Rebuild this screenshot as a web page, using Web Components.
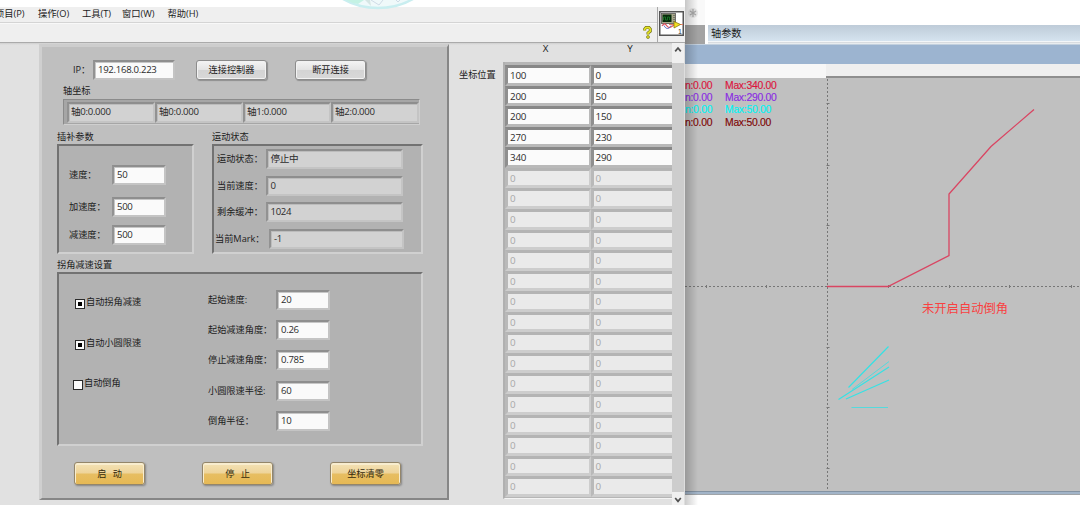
<!DOCTYPE html>
<html lang="zh">
<head>
<meta charset="utf-8">
<title>轴参数</title>
<style>
html,body{margin:0;height:100%;overflow:hidden;background:#fff}
body{font-family:"Open Sans","Noto Sans CJK SC",sans-serif;font-size:9.2px;line-height:12px;color:#1c1c1c}
</style>
</head>
<body>
<desk-top></desk-top>
<script>
const BASE = '*{box-sizing:border-box}:host{box-sizing:border-box;display:block;white-space:nowrap}';
function define(name, css, render) {
  customElements.define(name, class extends HTMLElement {
    constructor() { super(); this.attachShadow({mode: 'open'}); }
    connectedCallback() {
      this.shadowRoot.innerHTML = '<style>' + BASE + css + '</style>' + render(this);
    }
  });
}
const attr = (e, n, d = '') => e.getAttribute(n) ?? d;

/* sunken text box */
define('inset-box', `
:host{height:20px;border:2px solid;border-color:#8e8e8e #c4c4c4 #c4c4c4 #929292;box-shadow:inset 1px 1px #c6c6c6;
  background:#fafafa;padding-left:3px;font-size:9.6px;line-height:15px;letter-spacing:-.3px;color:#2b2b2b;overflow:hidden}
:host([readonly]){background:#d2d2d2;box-shadow:inset 1px 1px #bcbcbc}
`, () => '<slot></slot>');

/* caption with a text box after it */
define('form-field', `
:host{display:flex;align-items:center;height:20px}
span{flex:none;width:var(--lw)}
inset-box{flex:none;width:var(--iw)}
`, e => `<span>${attr(e,'label')}</span><inset-box ${e.hasAttribute('readonly')?'readonly':''}>${attr(e,'value')}</inset-box>`);

define('group-box', `
:host{display:flex;flex-direction:column}
b{font-weight:normal;height:13px;line-height:12px}
div{flex:1;background:#b2b2b2;border:2px solid;border-color:#727272 #d0d0d0 #d0d0d0 #727272}
`, e => `<b>${attr(e,'label')}</b><div><slot></slot></div>`);

define('check-item', `
:host{display:flex;height:12px}
i{flex:none;width:10px;height:10px;margin-top:2px;border:1px solid #2a2a2a;background:#fdfdfd;padding:2px}
:host([checked]) i::before{content:"";display:block;width:4px;height:4px;background:#000}
span{margin:-1px 0 0 1px}
`, () => '<i></i><span><slot></slot></span>');

define('push-button', `
:host{flex:none;width:71px;height:20px;border:1px solid #8c8c8c;border-radius:3px;text-align:center;line-height:18px;
 background:linear-gradient(#f4f4f4,#e4e4e4 48%,#d4d4d4 52%,#d8d8d8);box-shadow:inset 0 0 0 1px #f2f2f2,1px 1px 1px #8f8f8f}
:host([gold]){height:23px;line-height:21px;color:#33290c;border-color:#94866a;white-space:pre;word-spacing:.8px;
 background:linear-gradient(#f3e2b6,#eed49a 48%,#e7be62 52%,#e6b955);box-shadow:inset 0 1px 0 1px #f8edcf,1px 1px 2px #858585}
`, () => '<slot></slot>');

define('axis-strip', `
:host{display:grid;grid-template-columns:repeat(4,88px);height:26px;width:357px;padding:2px 0 0 3px;
 background:#a6a6a6;border:1px solid;border-color:#8b8b8b #cfcfcf #cfcfcf #8b8b8b}
`, () => ['轴0:0.000','轴0:0.000','轴1:0.000','轴2:0.000'].map(t => `<inset-box readonly style="height:21px;line-height:16px;padding-left:2px">${t}</inset-box>`).join(''));

define('coord-table', `
:host{width:169px;height:437px;background:#b6b6b6;border-left:2px solid #b0b0b0;border-bottom:1px solid #f4f4f4;
 padding:3px 0 0;overflow:hidden}
div{display:grid;grid-template-columns:85.5px 86px;grid-template-rows:repeat(21,20.57px)}
span{border:3px solid;border-color:#878787 #b9b9b9 #b9b9b9 #8f8f8f;border-right-width:2px;background:#fbfbfb;
 padding-left:2px;font-size:9.8px;line-height:15px;letter-spacing:-.2px;color:#2b2b2b}
.off{background:#eaeaea;color:#a8a8a8;border-color:#b4b4b4 #cdcdcd #cdcdcd #b9b9b9}
`, () => {
  const rows = [[100,0],[200,50],[200,150],[270,230],[340,290]];
  let h = '';
  for (let i = 0; i < 21; i++) for (let j = 0; j < 2; j++)
    h += rows[i] ? `<span>${rows[i][j]}</span>` : '<span class="off">0</span>';
  return `<div>${h}</div>`;
});

define('scroll-bar', `
:host{display:flex;flex-direction:column;width:13px;background:#cdcdcd;border-right:1px solid #dedede}
svg{flex:none;display:block;background:#f0f0f0}i{flex:1}
`, () => `<svg width="12" height="20"><path d="M3.200 8.400 6 5l2.800 3.400" fill="none" stroke="#505050" stroke-width="1.700"/></svg><i></i>
<svg width="12" height="13"><path d="M3.200 6 6 9.400 8.800 6" fill="none" stroke="#505050" stroke-width="1.700"/></svg>`);

define('control-panel', `
:host{width:410px;height:456px;background:#bfbfbf;border:solid;border-width:3px 2px 2px 3px;
 border-color:#cdcdcd #868686 #868686 #cfcfcf;padding:13px 0 0 15px}
.row{display:flex}
`, () => `
<div class="row" style="padding-left:16px">
 <form-field label="IP：" value="192.168.0.223" style="--lw:20px;--iw:82px"></form-field>
 <push-button style="margin-left:21px">连接控制器</push-button>
 <push-button style="margin-left:28px">断开连接</push-button>
</div>
<div style="margin:5px 0 0 6px;height:14px">轴坐标</div>
<axis-strip style="margin-left:6px"></axis-strip>
<div class="row" style="margin-top:6px;height:123px">
 <group-box label="插补参数" style="width:137px">
  <div style="padding:19px 0 0 10px">
   <form-field label="速度：" value="50" style="--lw:43px;--iw:54px"></form-field>
   <form-field label="加速度：" value="500" style="--lw:43px;--iw:54px;margin-top:12px"></form-field>
   <form-field label="减速度：" value="500" style="--lw:43px;--iw:54px;margin-top:8px"></form-field>
  </div>
 </group-box>
 <group-box label="运动状态" style="width:211px;margin-left:18px">
  <div style="padding:3px 0 0 3px">
   <form-field readonly label="运动状态：" value="停止中" style="--lw:48.500px;--iw:137px"></form-field>
   <form-field readonly label="当前速度：" value="0" style="--lw:48.500px;--iw:137px;margin-top:6.6px"></form-field>
   <form-field readonly label="剩余缓冲：" value="1024" style="--lw:48.500px;--iw:137px;margin-top:6.6px"></form-field>
   <form-field readonly label="当前Mark：" value="-1" style="--lw:54px;--iw:135px;margin:6.6px 0 0 -2px"></form-field>
  </div>
 </group-box>
</div>
<group-box label="拐角减速设置" style="width:366px;height:187px;margin-top:5px">
 <div class="row">
  <div style="padding:23px 0 0 15px;width:149px">
   <check-item checked style="margin-left:1px">自动拐角减速</check-item>
   <check-item checked style="margin:29px 0 0 1px">自动小圆限速</check-item>
   <check-item style="margin:28px 0 0 -1px">自动倒角</check-item>
  </div>
  <div style="padding-top:16px;--lw:68px;--iw:54px">
   <form-field label="起始速度:" value="20"></form-field>
   <form-field label="起始减速角度：" value="0.26" style="margin-top:10px"></form-field>
   <form-field label="停止减速角度：" value="0.785" style="margin-top:10px"></form-field>
   <form-field label="小圆限速半径:" value="60" style="margin-top:11px"></form-field>
   <form-field label="倒角半径：" value="10" style="margin-top:10px"></form-field>
  </div>
 </div>
</group-box>
<div class="row" style="gap:57px;padding:16px 0 0 17px">
 <push-button gold>启  动</push-button><push-button gold>停  止</push-button><push-button gold>坐标清零</push-button>
</div>`);

define('vi-icon', `
:host{width:28px;height:35px;border-left:1px solid #a8a8a8;padding:4px 0 0 1px}
svg{display:block}text{font:7px "Liberation Sans",sans-serif}
`, () => `<svg width="26" height="26" viewBox="0 0 26 26">
<rect x=".75" y=".75" width="23.500" height="23.500" fill="#fff" stroke="#555" stroke-width="1.500"/>
<rect x="2.500" y="2.500" width="14" height="10" fill="#a9a98c" stroke="#555" stroke-width=".8"/>
<rect x="3.500" y="3.500" width="9" height="7.500" fill="#062b0b"/><path d="M4.500 9V6h2v3h2V6h2v3" fill="none" stroke="#1c7d2b" stroke-width=".8"/>
<path d="M15 4v7" stroke="#444" stroke-dasharray="1 1"/>
<path d="M3 15c2-3 3-3 5 0s4 1 7-1" fill="none" stroke="#dc5360" stroke-width="1.300"/><path d="M5 14.500c2 4 5 4 7 0" fill="none" stroke="#5268c5"/>
<path d="M10 13.500h14" stroke="#e77d65"/><path d="M15 10.500 21.500 13.500 15 17z" fill="#f2df20" stroke="#8c7a12" stroke-width=".8"/>
<text x="19" y="22.500" fill="#333">1</text></svg>`);

define('vi-window', `
:host{display:flex;flex-direction:column;width:685px;height:505px;background:#e1e1e1}
.top{height:7px;background:#fff}
.head{display:flex;height:35px;background:#efefef}
.bars{flex:1;display:flex;flex-direction:column}
nav{height:16px;border-bottom:1px solid #d4d4d4;display:flex;font-size:9.3px;line-height:14px;letter-spacing:-.04px}
nav span{flex:none}
.tool{flex:1;display:flex;justify-content:flex-end;padding:2px 5px 0 0;border-top:1px solid #f8f8f8}
.body{flex:1;display:flex;border-top:1px solid #aaa;min-height:0;background:linear-gradient(#cfcfcf,#e1e1e1 2px)}
.coords{display:grid;grid-template-columns:44px 169px;grid-template-rows:19px 437px;padding-left:10px;flex:none}
.xy{grid-column:2;display:grid;grid-template-columns:85px 84px;text-align:center;line-height:12px;font-size:9.8px}
.logo{position:absolute;left:340px;top:0}
`, () => `
<div class="top"></div>
<svg class="logo" width="80" height="12"><circle cx="38" cy="-63" r="71" fill="#eff9fa" stroke="#c9eef0" stroke-width="2.500"/>
<path d="M6 0h18l-6 4-5-1z" fill="#c4f2e4"/><path d="M25 0h5l1 6z" fill="#d5e6e4"/><path d="M31 0l8 5 4-5M56 0l2 2 2-2" fill="none" stroke="#cfdbe6"/></svg>
<div class="head"><div class="bars">
<nav><span style="margin-left:-5px;width:43px">项目(P)</span><span style="width:44px">操作(O)</span><span style="width:40px">工具(T)</span><span style="width:45.500px">窗口(W)</span><span>帮助(H)</span></nav>
<div class="tool"><svg width="9" height="13"><path d="M1.700 4.400V3L3 1.600h3L7.300 3v2.200L5 7v1.500" fill="none" stroke="#75751c" stroke-width="3"/><path d="M1.700 4.400V3L3 1.600h3L7.300 3v2.200L5 7v1.500" fill="none" stroke="#e5e322" stroke-width="1.600"/><circle cx="5" cy="11" r="1.500" fill="#e2df20" stroke="#75751c" stroke-width=".7"/></svg></div>
</div><vi-icon></vi-icon></div>
<div class="body">
<control-panel style="margin:1px 0 0 39px;flex:none"></control-panel>
<div class="coords"><div class="xy"><span>X</span><span>Y</span></div>
<div style="padding-top:7px;grid-column:1">坐标位置</div><coord-table></coord-table></div>
<scroll-bar style="flex:none"></scroll-bar></div>`);

define('scope-plot', `
:host{position:relative;height:413px;background:#c0c0c0;display:grid}
svg{grid-area:1/1}
.legend{grid-area:1/1;padding:2px 0 0 0;font:10.4px/12.2px "Liberation Sans",sans-serif;letter-spacing:-.28px;-webkit-text-stroke:.15px}
.legend div{display:grid;grid-template-columns:40px 60px}
.note{position:absolute;left:237px;top:222px;font-size:12.3px;line-height:18px;color:#f94141}
`, () => {
  const ticks = [103,165,225,347,407,468].map(y => `M141.500 ${y-78+.5}h3`).join('') + [706,766,888,949,1009,1071].map(x => `M${x-685+.5} 207v3`).join('');
  return `<svg width="395" height="413" fill="none">
<path d="M142.500 1V413M0 208.500H395" stroke="#777" stroke-dasharray="2 2"/><path d="${ticks}" stroke="#777"/>
<path d="M142 208.500h61L264 177.500v-61.500L306 68.500 349 31.500" stroke="#d94562" stroke-width="1.300"/>
<path d="M163.500 309.500 203.500 268.500M153.500 321.500 204 289M161 321l43-19" stroke="#35e2e4" stroke-width="1.200"/>
<path d="M167 311.500l37-28M166.500 329.500H203" stroke="#55dadd" stroke-width="1"/></svg>
<div class="legend">${[['#dc143c','340'],['#8a2be2','290'],['#00f4f4','50'],['#7e0505','50']].map(([c,v]) => `<div style="color:${c}"><span>n:0.00</span><span>Max:${v}.00</span></div>`).join('')}</div>
<div class="note">未开启自动倒角</div>`;
});

define('scope-window', `
:host{display:flex;flex-direction:column;width:395px;height:505px;background:#fff}
.tabs{display:flex;height:44px}
.side{width:20px;display:flex;flex-direction:column}
.side svg{height:25px;background:#f9f9f9}.side i{flex:1;background:#a3a3a3}
.title{flex:1;margin:25px 0 0 3px;height:16px;background:linear-gradient(#becbd8,#d5e3ef);font-size:10.2px;line-height:16px;padding-left:3px;
 box-shadow:0 1px #f3f6f8,0 2px #d8dce0,0 3px #e8ecef}
.blue{height:20px;background:#9cb4d0;border-top:1px solid #c2d0de}
.ruler{display:flex;height:14px;background:#efefef;border-bottom:2px solid #8f8f8f}
.ruler i{width:141px;height:14px;background:#f7f7f7}
.foot{height:4px;background:#a2b4c8;border-top:1px solid #8493a3;border-bottom:1px solid #a0a4a8}
.shade{position:absolute;left:685px;top:0;width:13px;height:505px;background:linear-gradient(90deg,rgba(0,0,0,.2),transparent)}
`, () => `
<div class="tabs"><div class="side"><svg width="20" height="25"><circle cx="8" cy="13" r="5" fill="#e6e6e6"/><path d="M8 9v8M5 11l6 4M11 11l-6 4" stroke="#aaa" stroke-width="1.200"/></svg><i></i></div><div class="title">轴参数</div></div>
<div class="blue"></div><div class="ruler"><i></i></div><scope-plot></scope-plot><div class="foot"></div><div class="shade"></div>`);

define('desk-top', ':host{display:flex;width:1080px;height:505px;overflow:hidden}vi-window,scope-window{flex:none}',
  () => '<vi-window></vi-window><scope-window></scope-window>');
</script>
</body>
</html>
